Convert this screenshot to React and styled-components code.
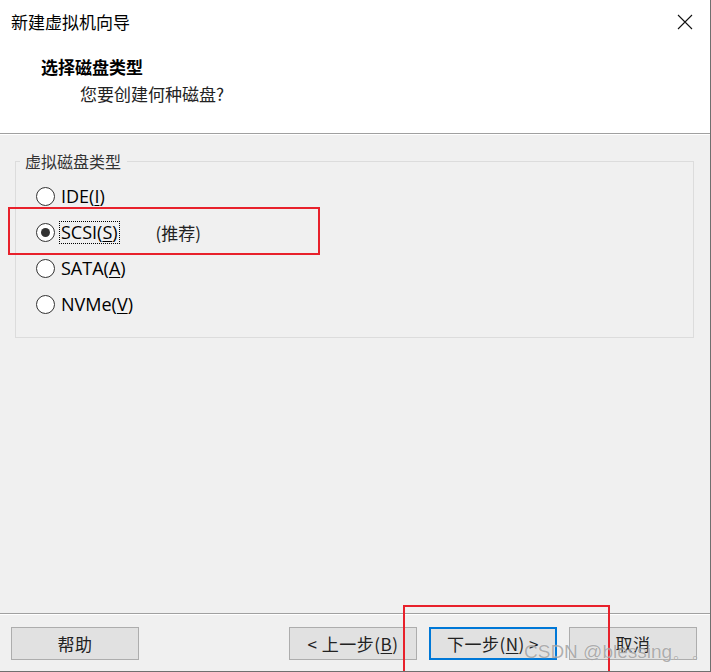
import React from 'react';
import styled, { createGlobalStyle } from 'styled-components';

const GlobalStyle = createGlobalStyle`
  html, body {
    margin: 0;
    padding: 0;
    background: #f0f0f0;
  }
`;

const cjk = `"Noto Sans CJK SC", "Noto Sans", sans-serif`;
const ui = `"Open Sans", "Noto Sans CJK SC", sans-serif`;

const Window = styled.div`
  position: relative;
  width: 711px;
  height: 672px;
  box-sizing: border-box;
  display: flex;
  flex-direction: column;
  background: #f0f0f0;
  border-right: 1px solid #6f6f6f;
  border-bottom: 1px solid #6f6f6f;
  overflow: hidden;
  font-family: ${cjk};
  color: #000;
`;

const Header = styled.div`
  height: 133px;
  background: #fff;
  border-bottom: 1px solid #a0a0a0;
  box-shadow: 0 1px 0 #fff;
  display: flex;
  flex-direction: column;
`;

const TitleBar = styled.div`
  height: 44px;
  display: flex;
  align-items: center;
  justify-content: space-between;
  padding: 0 16px 0 11px;
`;

const Title = styled.div`
  font-size: 17px;
  line-height: 20px;
`;

const CloseButton = styled.div`
  width: 18px;
  height: 18px;
  display: flex;
  align-items: center;
  justify-content: center;
`;

const Heading = styled.div`
  padding-top: 12px;
  padding-left: ${(p) => p.indent}px;
  font-size: 17px;
  line-height: 22px;
  font-weight: ${(p) => (p.bold ? 700 : 400)};
  color: ${(p) => (p.bold ? '#000' : '#222')};
`;

const SubHeading = styled(Heading)`
  padding-top: 5px;
`;

const Body = styled.div`
  flex: 1;
  padding: 17px 16px 0 15px;
`;

const Group = styled.fieldset`
  margin: 0;
  padding: 7px 0 15px 20px;
  border: 1px solid #dcdcdc;
  min-width: 0;
`;

const Legend = styled.legend`
  margin-left: -16px;
  padding: 0 6px 0 5px;
  font-size: 16px;
  line-height: 20px;
  color: #333;
`;

const Row = styled.label`
  height: 36px;
  display: flex;
  align-items: center;
  gap: 4px;
  font-family: ${ui};
  font-size: 18px;
  color: #000;
`;

const Radio = styled.span`
  width: 17px;
  height: 17px;
  border-radius: 50%;
  border: 1px solid #333;
  background: #fff;
  display: flex;
  align-items: center;
  justify-content: center;

  &::after {
    content: '';
    width: 9px;
    height: 9px;
    border-radius: 50%;
    background: ${(p) => (p.checked ? '#333' : 'transparent')};
  }
`;

const LabelText = styled.span`
  padding: 0 1px;
  line-height: 21px;
  border: 1px dotted ${(p) => (p.focused ? '#000' : 'transparent')};
`;

const Hint = styled.span`
  margin-left: 32px;
  font-family: ${cjk};
  font-size: 17px;
  color: #222;
`;

const Key = styled.u`
  text-underline-offset: 2px;
`;

const Footer = styled.div`
  height: 58px;
  box-sizing: border-box;
  border-top: 1px solid #a0a0a0;
  box-shadow: inset 0 1px 0 #fff;
  padding: 13px 13px 0 11px;
  display: flex;
  justify-content: space-between;
`;

const ButtonGroup = styled.div`
  display: flex;
  gap: 12px;
`;

const Button = styled.button`
  width: 128px;
  height: 33px;
  box-sizing: border-box;
  background: #e1e1e1;
  border: ${(p) => (p.primary ? '2px solid #0078d7' : '1px solid #adadad')};
  font-family: ${cjk};
  font-size: 17px;
  color: #222;
  padding: 0;
  display: flex;
  align-items: center;
  justify-content: center;
  letter-spacing: 0.5px;
`;

const Annotation = styled.div`
  position: absolute;
  left: ${(p) => p.x}px;
  top: ${(p) => p.y}px;
  width: ${(p) => p.w}px;
  height: ${(p) => p.h}px;
  box-sizing: border-box;
  border: 2px solid #e8212b;
  pointer-events: none;
`;

const Watermark = styled.div`
  position: absolute;
  left: 524px;
  top: 640px;
  font-family: "Liberation Sans", sans-serif;
  font-size: 19px;
  line-height: 24px;
  color: rgba(110, 110, 110, 0.55);
  text-shadow: 0 0 1px rgba(255, 255, 255, 0.8);
  white-space: nowrap;
  pointer-events: none;
`;

const options = [
  { label: 'IDE', key: 'I' },
  { label: 'SCSI', key: 'S', checked: true, hint: '(推荐)' },
  { label: 'SATA', key: 'A' },
  { label: 'NVMe', key: 'V' },
];

export default function App() {
  return (
    <>
      <GlobalStyle />
      <Window>
        <Header>
          <TitleBar>
            <Title>新建虚拟机向导</Title>
            <CloseButton>
              <svg width="16" height="16" viewBox="0 0 16 16">
                <path d="M1 1L15 15M15 1L1 15" stroke="#111" strokeWidth="1.1" fill="none" />
              </svg>
            </CloseButton>
          </TitleBar>
          <Heading bold indent={41}>选择磁盘类型</Heading>
          <SubHeading indent={80}>您要创建何种磁盘?</SubHeading>
        </Header>

        <Body>
          <Group>
            <Legend>虚拟磁盘类型</Legend>
            {options.map((o) => (
              <Row key={o.label}>
                <Radio checked={o.checked} />
                <LabelText focused={o.checked}>
                  {o.label}(<Key>{o.key}</Key>)
                </LabelText>
                {o.hint && <Hint>{o.hint}</Hint>}
              </Row>
            ))}
          </Group>
        </Body>

        <Footer>
          <Button>帮助</Button>
          <ButtonGroup>
            <Button>&lt; 上一步(<Key>B</Key>)</Button>
            <Button primary>下一步(<Key>N</Key>) &gt;</Button>
            <Button>取消</Button>
          </ButtonGroup>
        </Footer>

        <Annotation x={8} y={207} w={312} h={48} />
        <Annotation x={403} y={605} w={207} h={72} />
        <Watermark>CSDN @blessing。。</Watermark>
      </Window>
    </>
  );
}
